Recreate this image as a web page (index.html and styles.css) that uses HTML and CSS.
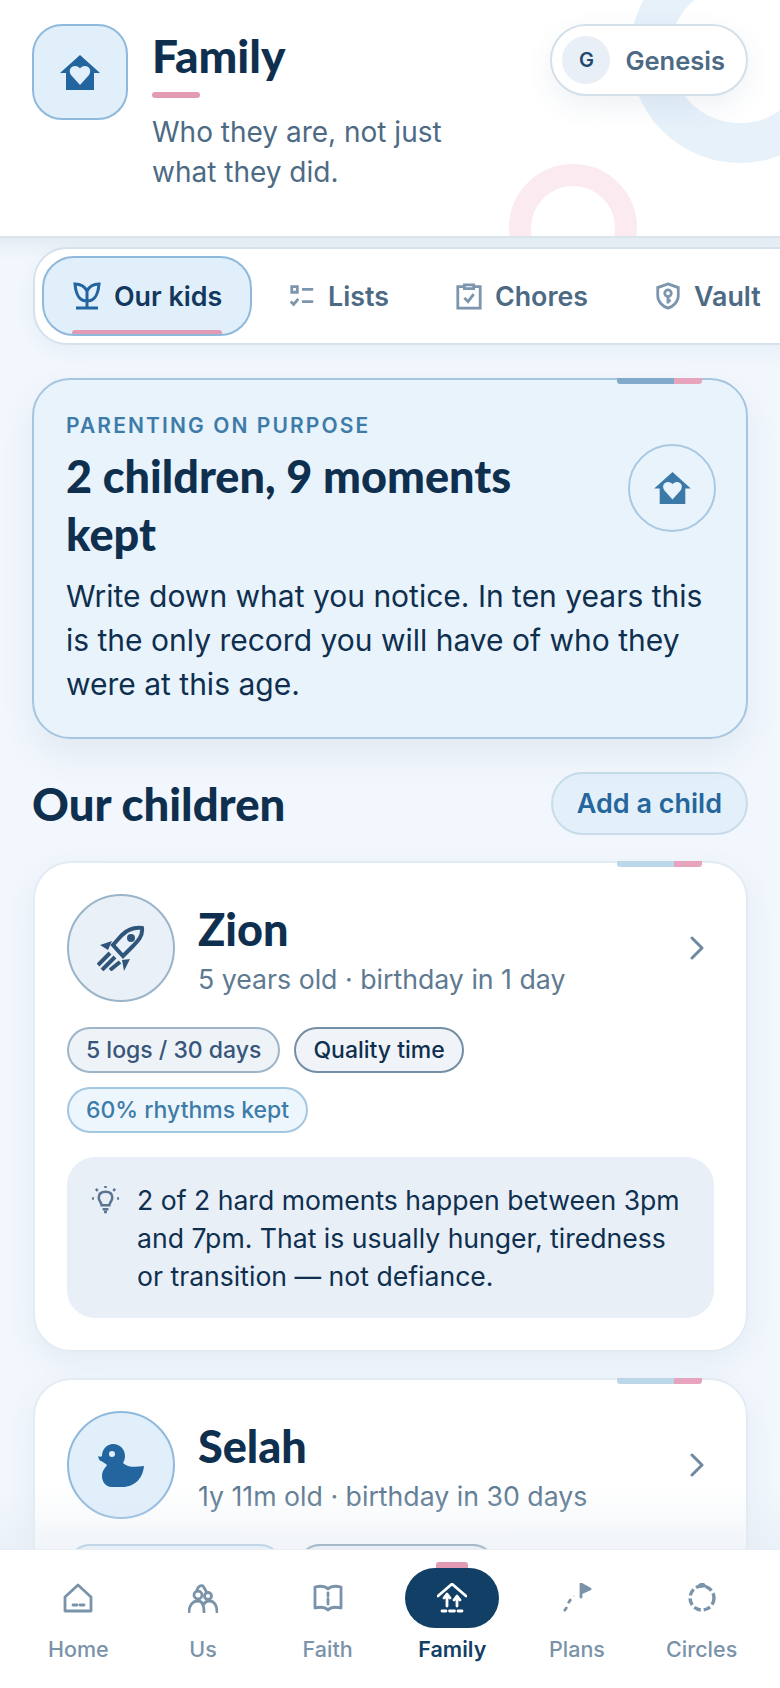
FILE: index.html
```html
<!doctype html>
<html lang="en">
  <head>
    <meta charset="UTF-8" />
    <meta name="viewport" content="width=device-width, initial-scale=1.0" />
    <title>Family</title>
    <link rel="stylesheet" href="styles.css">
  </head>
  <body>
    <div class="app">
      <!-- Header -->
      <header class="top">
        <span class="ring ring-blue"></span>
        <span class="ring ring-pink"></span>
        <div class="top-icon">
          <svg class="house-heart" viewBox="0 0 40 35"><path fill-rule="evenodd" d="M20 0L40 18H34V35H6V18H0ZM20 30L29 20C32 15 29 11 25 11C22.5 11 21 12 20 13.5C19 12 17.5 11 15 11C11 11 8 15 11 20Z"/></svg>
        </div>
        <div class="top-text">
          <h1>Family</h1>
          <div class="top-rule"></div>
          <p>Who they are, not just what they did.</p>
        </div>
        <div class="user-pill">
          <span class="user-avatar">G</span>
          <span>Genesis</span>
        </div>
      </header>

      <main class="content">
        <!-- Tabs -->
        <div class="tabs-wrap">
          <nav class="tabs">
            <a class="tab active">
              <svg viewBox="0 0 30 30"><path d="M15 20C7 20 4 14 3 3C10 3 13 6 15 10C17 6 20 3 27 3C26 14 23 20 15 20ZM15 10V26M4 27H26"/></svg>
              Our kids
            </a>
            <a class="tab">
              <svg viewBox="0 0 30 30"><path d="M4 5H10V11H4ZM3 21L6 24L11 18M15 8H27M15 21H27"/></svg>
              Lists
            </a>
            <a class="tab">
              <svg viewBox="0 0 30 30"><path d="M9 5H3V28H27V5H21M10 3H20V7H10ZM10 17L14 21L20 13"/></svg>
              Chores
            </a>
            <a class="tab">
              <svg viewBox="0 0 30 30"><path d="M15 2L26 6V15C26 21 21 26 15 28C9 26 4 21 4 15V6ZM15 16V23M15 20H18"/><circle cx="15" cy="12" r="3.5"/></svg>
              Vault
            </a>
          </nav>
        </div>

        <!-- Hero -->
        <section class="hero">
          <span class="accent"><i></i><b></b></span>
          <div class="hero-top">
            <div>
              <div class="eyebrow">PARENTING ON PURPOSE</div>
              <h2>2 children, 9 moments kept</h2>
            </div>
            <div class="hero-icon">
              <svg class="house-heart" viewBox="0 0 40 35"><path fill-rule="evenodd" d="M20 0L40 18H34V35H6V18H0ZM20 30L29 20C32 15 29 11 25 11C22.5 11 21 12 20 13.5C19 12 17.5 11 15 11C11 11 8 15 11 20Z"/></svg>
            </div>
          </div>
          <p>Write down what you notice. In ten years this is the only record you will have of who they were at this age.</p>
        </section>

        <div class="section-head">
          <h2>Our children</h2>
          <button class="add-btn">Add a child</button>
        </div>

        <!-- Child cards -->
        <article class="child">
          <span class="accent light"><i></i><b></b></span>
          <div class="child-head">
            <div class="avatar slate">
              <svg class="rocket" viewBox="0 0 48 46">
                <path class="rocket-body" d="M45 3C37 2 30 5 25 10L16 20L26 31L35 22C41 16 46 11 45 3Z"/>
                <circle cx="34" cy="13" r="4"/>
                <path d="M3 20L15 16L11 25ZM25 35L33 34L27 46Z"/>
                <path class="rocket-trail" d="M13 28L1 40M18 32L5 45M23 37L13 45"/>
              </svg>
            </div>
            <div class="child-text">
              <h3>Zion</h3>
              <div class="child-sub">5 years old · birthday in 1 day</div>
            </div>
            <svg class="chev" viewBox="0 0 14 24"><path d="M2 2L12 12L2 22"/></svg>
          </div>
          <div class="chips">
            <span class="chip">5 logs / 30 days</span>
            <span class="chip dark">Quality time</span>
            <span class="chip blue">60% rhythms kept</span>
          </div>
          <div class="note">
            <svg viewBox="0 0 30 30"><path d="M11 21C11 18 8 17 8 13C8 9 11 7 15 7C19 7 22 9 22 13C22 17 19 18 19 21ZM12 25H18M13.5 28H16.5M15 1V3M5 4L7 6M25 4L23 6M1 14H3M27 14H29"/></svg>
            <p>2 of 2 hard moments happen between 3pm and 7pm. That is usually hunger, tiredness or transition — not defiance.</p>
          </div>
        </article>

        <article class="child">
          <span class="accent light"><i></i><b></b></span>
          <div class="child-head">
            <div class="avatar sky">
              <svg class="duck" viewBox="0 0 46 43"><path fill-rule="evenodd" d="M15 0C22 0 27 5 27 12C27 15 26 17 25 19C30 24 38 23 46 22C45 33 38 43 24 43H14C7 43 4 37 4 32C4 27 7 24 9 21C7 19 5 18 3 17C2 17 1 16 0 12C2 13 3 13 4 12C4 5 9 0 15 0ZM14 7A3 3 0 1 0 14 13A3 3 0 1 0 14 7Z"/></svg>
            </div>
            <div class="child-text">
              <h3>Selah</h3>
              <div class="child-sub">1y 11m old · birthday in 30 days</div>
            </div>
            <svg class="chev" viewBox="0 0 14 24"><path d="M2 2L12 12L2 22"/></svg>
          </div>
          <div class="chips">
            <span class="chip blue chip-wide"></span>
            <span class="chip dark chip-mid"></span>
          </div>
        </article>
        <div class="fade"></div>
      </main>

      <!-- Bottom nav -->
      <nav class="bottom">
        <a class="nav-item">
          <span class="nav-icon"><svg viewBox="0 0 30 30"><path d="M15 2L28 14V28H2V14ZM10 22H14M17 22H21"/></svg></span>
          Home
        </a>
        <a class="nav-item">
          <span class="nav-icon"><svg viewBox="0 0 30 30"><circle cx="10" cy="12" r="4"/><circle cx="20" cy="13" r="3.5"/><path d="M1 29C1 22 5 18 10 18C14 18 16 22 16 29M16 21C17 19 19 18 21 18C26 18 29 22 29 29M9 7C10 3 13 2 15 3M15 3L18 8"/></svg></span>
          Us
        </a>
        <a class="nav-item">
          <span class="nav-icon"><svg viewBox="0 0 30 30"><path d="M15 6C12 3 6 3 2 4V25C6 24 12 24 15 27C18 24 24 24 28 25V4C24 3 18 3 15 6ZM15 10V13M15 16V21"/></svg></span>
          Faith
        </a>
        <a class="nav-item current">
          <span class="nav-icon"><svg viewBox="0 0 30 30"><path d="M1 13L15 1L29 13M10 23V12M20 23V14M7 15L10 11L13 15M17 17L20 13L23 17M5 28H9M12.5 28H17.5M21 28H25"/></svg></span>
          Family
        </a>
        <a class="nav-item">
          <span class="nav-icon"><svg viewBox="0 0 30 30"><path class="flag" d="M19 14V1L28 6L19 10"/><path class="dots" d="M2 28C4 26 5 24 6 21C7 18 9 16 12 13"/></svg></span>
          Plans
        </a>
        <a class="nav-item">
          <span class="nav-icon"><svg viewBox="0 0 30 30"><circle class="ring-dash" cx="15" cy="15" r="12"/><path class="flag" d="M15 0L12 3H18Z"/></svg></span>
          Circles
        </a>
      </nav>
    </div>
  </body>
</html>
```

FILE: styles.css
```css
* {
  box-sizing: border-box;
}

html, body {
  margin: 0;
  padding: 0;
}

body {
  font-family: Inter, "Liberation Sans", sans-serif;
  color: #0f2f4f;
}

h1, h2, h3, p {
  margin: 0;
}

.app {
  width: 780px;
  height: 1688px;
  display: flex;
  flex-direction: column;
  overflow: hidden;
  background: #f2f7fd;
}

/* Header */
.top {
  position: relative;
  flex: none;
  height: 238px;
  display: flex;
  align-items: flex-start;
  gap: 24px;
  padding: 24px 32px 0;
  background: #fff;
  border-bottom: 2px solid #d9e4ed;
  overflow: hidden;
}

.ring {
  position: absolute;
  border-radius: 50%;
  border-style: solid;
}

.ring-blue {
  width: 220px;
  height: 220px;
  top: -57px;
  left: 630px;
  border-width: 40px;
  border-color: #e6f1fa;
}

.ring-pink {
  width: 128px;
  height: 128px;
  top: 164px;
  left: 509px;
  border-width: 22px;
  border-color: #fbeaf0;
}

.top-icon {
  position: relative;
  flex: none;
  width: 96px;
  height: 96px;
  display: flex;
  align-items: center;
  justify-content: center;
  background: #e1effb;
  border: 2px solid #8fb9dc;
  border-radius: 30px;
}

.house-heart {
  width: 40px;
  height: 35px;
  fill: #23669f;
}

.top-text {
  position: relative;
  width: 310px;
}

.top-text h1 {
  font-family: Lato, sans-serif;
  font-weight: 900;
  font-size: 46px;
  line-height: 56px;
  margin-top: 4px;
  color: #0f2f4f;
}

.top-rule {
  width: 48px;
  height: 6px;
  margin-top: 8px;
  border-radius: 3px;
  background: #e39ab5;
}

.top-text p {
  margin-top: 14px;
  font-size: 28px;
  line-height: 40px;
  color: #4d6a85;
}

.user-pill {
  position: relative;
  margin-left: auto;
  height: 72px;
  display: flex;
  align-items: center;
  gap: 15px;
  padding: 0 21px 0 10px;
  background: #fff;
  border: 2px solid #d3e0ea;
  border-radius: 36px;
  box-shadow: 0 10px 28px rgba(40, 80, 120, 0.08);
  font-size: 25.5px;
  font-weight: 600;
  color: #4d6a85;
}

.user-avatar {
  width: 48px;
  height: 48px;
  display: flex;
  align-items: center;
  justify-content: center;
  border-radius: 50%;
  background: #e8eff6;
  font-size: 20px;
  color: #23486d;
}

/* Main */
.content {
  position: relative;
  flex: 1;
  min-height: 0;
  overflow: hidden;
}

.fade {
  position: absolute;
  left: 0;
  right: 0;
  bottom: 0;
  height: 60px;
  background: linear-gradient(rgba(226, 234, 242, 0), rgba(226, 234, 242, 0.5));
}

/* Tabs */
.tabs-wrap {
  padding: 9px 0 0 33px;
  background: linear-gradient(#e4ecf3, #f2f7fd 22px);
}

.tabs {
  width: 800px;
  height: 98px;
  display: flex;
  align-items: center;
  gap: 6px;
  padding: 0 7px;
  background: #fff;
  border: 2px solid #d5e1ec;
  border-radius: 34px;
  box-shadow: 0 6px 18px rgba(40, 80, 120, 0.06);
}

.tab {
  position: relative;
  height: 80px;
  display: flex;
  align-items: center;
  gap: 12px;
  padding: 0 28px;
  border: 2px solid transparent;
  border-radius: 32px;
  font-size: 26.8px;
  font-weight: 600;
  color: #4d6a85;
}

.tab svg {
  width: 28px;
  height: 28px;
  fill: none;
  stroke: #7c96ad;
  stroke-width: 3;
}

.tab.active {
  background: #e1effb;
  border-color: #8fb9dc;
  color: #12385e;
  overflow: hidden;
}

.tab.active svg {
  width: 30px;
  height: 30px;
  stroke: #23669f;
}

.tab.active::after {
  content: "";
  position: absolute;
  left: 28px;
  right: 28px;
  bottom: -2px;
  height: 6px;
  border-radius: 3px 3px 0 0;
  background: #e39ab5;
}

/* Hero */
.hero {
  position: relative;
  margin: 33px 32px 0;
  height: 361px;
  padding: 33px 32px 0;
  background: #e9f3fc;
  border: 2px solid #a6c6e0;
  border-radius: 38px;
  box-shadow: 0 16px 34px rgba(40, 80, 120, 0.08);
}

.accent {
  position: absolute;
  top: -2px;
  right: 44px;
  display: flex;
  height: 6px;
  border-radius: 0 0 3px 3px;
  overflow: hidden;
}

.accent i {
  width: 57px;
  background: #82a9c9;
}

.accent b {
  width: 28px;
  background: #e7a5bd;
}

.accent.light i {
  background: #bcd7ea;
}

.hero-top {
  display: flex;
  align-items: center;
  justify-content: space-between;
}

.eyebrow {
  font-size: 21px;
  line-height: 26px;
  font-weight: 600;
  letter-spacing: 0.1em;
  color: #3d7ca9;
}

.hero h2 {
  width: 470px;
  margin-top: 8px;
  font-family: Lato, sans-serif;
  font-weight: 900;
  font-size: 45px;
  line-height: 58px;
  color: #0f2f4f;
}

.hero-icon {
  flex: none;
  width: 88px;
  height: 88px;
  margin-right: -2px;
  display: flex;
  align-items: center;
  justify-content: center;
  border: 2px solid #a9c8e1;
  border-radius: 50%;
}

.hero-icon svg {
  width: 37px;
  height: 32px;
  fill: #3a79a8;
}

.hero p {
  margin-top: 11px;
  font-size: 30px;
  line-height: 44px;
  color: #0f2f4f;
}

/* Section head */
.section-head {
  display: flex;
  align-items: center;
  justify-content: space-between;
  margin: 33px 32px 0;
}

.section-head h2 {
  font-family: Lato, sans-serif;
  font-weight: 900;
  font-size: 45.5px;
  line-height: 56px;
}

.add-btn {
  height: 63px;
  padding: 0 24px;
  font-family: Inter, sans-serif;
  font-size: 27px;
  font-weight: 600;
  color: #25669c;
  background: #e3eff9;
  border: 2px solid #c9dcea;
  border-radius: 32px;
}

/* Child card */
.child {
  position: relative;
  margin: 26px 32px 26px 33px;
  padding: 31px 32px 32px;
  background: #fff;
  border: 2px solid #e3ebf3;
  border-radius: 38px;
  box-shadow: 0 10px 30px rgba(40, 80, 120, 0.07);
}

.child-head {
  display: flex;
  align-items: center;
  gap: 23px;
}

.avatar {
  flex: none;
  width: 108px;
  height: 108px;
  display: flex;
  align-items: center;
  justify-content: center;
  border: 2px solid;
  border-radius: 50%;
}

.avatar.slate {
  background: #e9f0f7;
  border-color: #9ab4c9;
}

.avatar.sky {
  background: #e1effb;
  border-color: #8fb9dc;
}

.rocket {
  width: 48px;
  height: 46px;
  fill: #2f567a;
}

.rocket-body {
  fill: none;
  stroke: #2f567a;
  stroke-width: 4;
}

.rocket-trail {
  fill: none;
  stroke: #2f567a;
  stroke-width: 4;
}

.duck {
  width: 46px;
  height: 43px;
  fill: #23669f;
}

.child-text {
  flex: 1;
  padding-top: 4px;
}

.child h3 {
  font-family: Lato, sans-serif;
  font-weight: 900;
  font-size: 45px;
  line-height: 52px;
  color: #0f2f4f;
}

.child-sub {
  margin-top: 6px;
  font-size: 26.7px;
  line-height: 36px;
  color: #5e7a92;
}

.chev {
  flex: none;
  width: 14px;
  height: 24px;
  margin-right: 10px;
  fill: none;
  stroke: #6f899f;
  stroke-width: 3;
  stroke-linecap: round;
  stroke-linejoin: round;
}

.chips {
  display: flex;
  flex-wrap: wrap;
  gap: 14px;
  margin-top: 25px;
}

.chip {
  height: 46px;
  display: flex;
  align-items: center;
  padding: 0 17px;
  font-size: 23px;
  font-weight: 500;
  color: #38567a;
  background: #eef3f8;
  border: 2px solid #9fb5c7;
  border-radius: 24px;
}

.chip.dark {
  color: #0f2f4f;
  background: #f0f4f8;
  border-color: #738ea5;
}

.chip.blue {
  color: #3d7ca9;
  background: #eef6fd;
  border-color: #a3c6e1;
}

.chip-wide {
  width: 216px;
}

.chip-mid {
  width: 199px;
}

.note {
  display: flex;
  align-items: flex-start;
  gap: 17px;
  margin-top: 24px;
  padding: 24px 28px 23px 24px;
  background: #e8eff7;
  border-radius: 28px;
}

.note svg {
  flex: none;
  width: 29px;
  height: 29px;
  margin-top: 4px;
  fill: none;
  stroke: #5b7591;
  stroke-width: 2.6;
}

.note p {
  font-size: 26.6px;
  line-height: 38px;
  color: #0f2f4f;
}

/* Bottom nav */
.bottom {
  position: relative;
  flex: none;
  height: 139px;
  display: grid;
  grid-template-columns: repeat(6, 1fr);
  padding: 0 16px;
  background: #fff;
  border-top: 1px solid #e8eef4;
}

.nav-item {
  display: flex;
  flex-direction: column;
  align-items: center;
  font-size: 21.5px;
  font-weight: 500;
  color: #7a93a9;
}

.nav-icon {
  position: relative;
  width: 94px;
  height: 60px;
  margin: 18px 0 8px;
  display: flex;
  align-items: center;
  justify-content: center;
}

.nav-icon svg {
  width: 30px;
  height: 30px;
  fill: none;
  stroke: #7a93a9;
  stroke-width: 2.8;
  stroke-linejoin: round;
  stroke-linecap: round;
}

.nav-item.current {
  font-weight: 600;
  color: #123f66;
}

.nav-item.current .nav-icon {
  background: #123f66;
  border-radius: 30px;
}

.nav-item.current .nav-icon::before {
  content: "";
  position: absolute;
  top: -6px;
  left: 31px;
  width: 32px;
  height: 6px;
  border-radius: 3px 3px 0 0;
  background: #e39ab5;
}

.nav-item.current svg {
  stroke: #fff;
}

.flag {
  fill: #7a93a9;
}

.dots {
  stroke-dasharray: 5 4;
  stroke-linecap: butt;
}

.ring-dash {
  stroke-dasharray: 7 3;
  stroke-width: 3.4;
  stroke-linecap: butt;
}
```
